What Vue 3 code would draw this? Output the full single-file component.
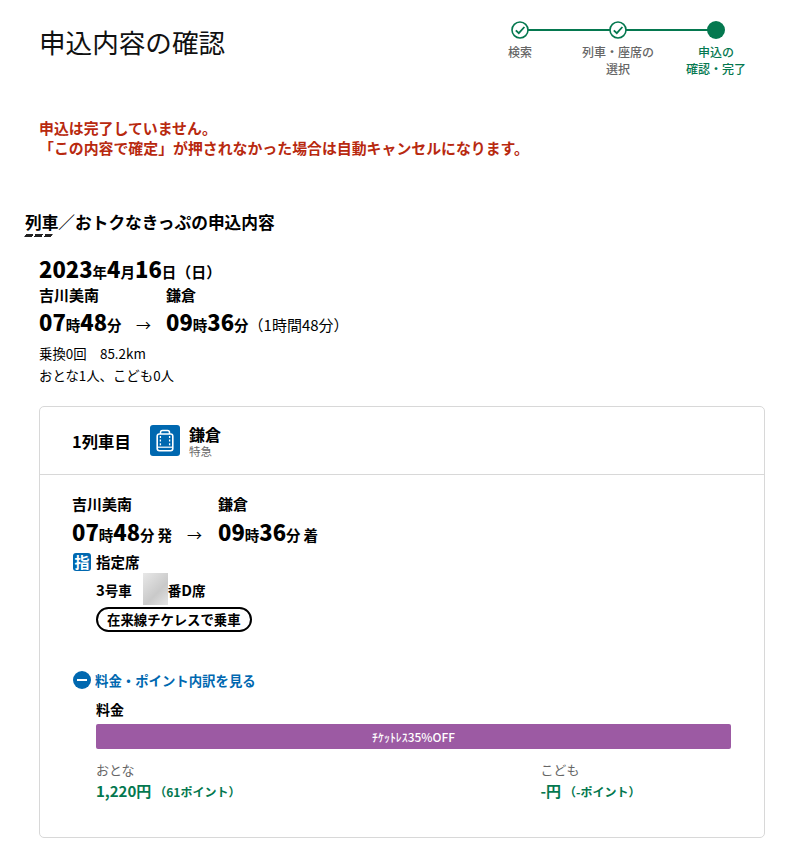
<script setup>
const steps = [
  { lines: ['検索'], done: true },
  { lines: ['列車・座席の', '選択'], done: true },
  { lines: ['申込の', '確認・完了'], done: false },
]
</script>

<template>
  <main class="page">
    <header class="top">
      <h1 class="title">申込内容の確認</h1>
      <ol class="stepper">
        <li v-for="(s, i) in steps" :key="i" class="step" :class="{ current: !s.done, last: i === 2 }">
          <span class="dot">
            <svg v-if="s.done" width="18" height="18" viewBox="0 0 18 18">
              <circle cx="9" cy="9" r="8" fill="#fff" stroke="#04784f" stroke-width="1.6" />
              <path d="M4.8 9.3l3 2.9L13.4 6" fill="none" stroke="#04784f" stroke-width="1.8" />
            </svg>
          </span>
          <span class="step-label"><span v-for="l in s.lines" :key="l" class="step-line">{{ l }}</span></span>
        </li>
      </ol>
    </header>

    <p class="warning">申込は完了していません。<br />「この内容で確定」が押されなかった場合は自動キャンセルになります。</p>

    <h2 class="section"><span class="section-text">列車／おトクなきっぷの申込内容</span></h2>

    <section class="summary">
      <div class="date"><b>2023</b>年<b>4</b>月<b>16</b>日<span class="dow">（日）</span></div>
      <div class="stations">
        <span class="st-from">吉川美南</span><span>鎌倉</span>
      </div>
      <div class="times">
        <span class="time-from"><b>07</b>時<b>48</b>分</span>
        <span class="arrow">→</span>
        <span><b>09</b>時<b>36</b>分</span>
        <span class="duration">（1時間48分）</span>
      </div>
      <p class="meta">乗換0回　85.2km</p>
      <p class="meta">おとな1人、こども0人</p>
    </section>

    <section class="card">
      <div class="card-head">
        <span class="train-no">1列車目</span>
        <span class="train-icon">
          <svg width="30" height="31" viewBox="0 0 30 31">
            <rect width="30" height="31" rx="3" fill="#0068b0" />
            <path d="M10.5 9V7.5Q10.5 5.5 12.5 5.5H17.5Q19.5 5.5 19.5 7.5V9" fill="none" stroke="#fff" stroke-width="1.5" />
            <rect x="7.2" y="9" width="15.6" height="16.8" rx="2.2" fill="none" stroke="#fff" stroke-width="1.6" />
            <path d="M7.5 22.2H22.5" stroke="#fff" stroke-width="1.2" />
            <path d="M10.4 11v10M19.6 11v10" stroke="#fff" stroke-width="1.3" stroke-dasharray="2 1.6" />
          </svg>
        </span>
        <span class="train-name"><strong>鎌倉</strong><small>特急</small></span>
      </div>
      <div class="card-body">
        <div class="stations detail">
          <span class="st-from-d">吉川美南</span><span>鎌倉</span>
        </div>
        <div class="times detail-times">
          <span class="time-from-d"><b>07</b>時<b>48</b>分<em>発</em></span>
          <span class="arrow-d">→</span>
          <span><b>09</b>時<b>36</b>分<em>着</em></span>
        </div>
        <div class="seat-type"><span class="seat-badge">指</span>指定席</div>
        <div class="seat-row">
          <span><i>3</i>号車</span><span class="blur"></span><span>番<i>D</i>席</span>
        </div>
        <span class="pill">在来線チケレスで乗車</span>

        <div class="toggle">
          <span class="minus"></span>
          料金・ポイント内訳を見る
        </div>
        <div class="fare">
          <h3 class="fare-title">料金</h3>
          <div class="fare-bar">ﾁｹｯﾄﾚｽ35%OFF</div>
          <div class="fare-cols">
            <div class="fare-col">
              <div class="fare-who">おとな</div>
              <div class="fare-price">1,220円<span>（61ポイント）</span></div>
            </div>
            <div class="fare-col">
              <div class="fare-who">こども</div>
              <div class="fare-price">-円<span>（-ポイント）</span></div>
            </div>
          </div>
        </div>
      </div>
    </section>
  </main>
</template>

<style>
html, body { margin: 0; background: #fff; }
</style>

<style scoped>
.page {
  width: 800px;
  height: 860px;
  overflow: hidden;
  box-sizing: border-box;
  font-family: "Noto Sans CJK JP", "Noto Sans", sans-serif;
  color: #000;
}
.top {
  display: flex;
  justify-content: space-between;
  padding: 22px 0 0 39px;
  height: 100px;
  box-sizing: border-box;
}
.title {
  margin: 0;
  font-size: 26.6px;
  font-weight: 400;
  line-height: 40px;
  color: #111;
}
.stepper {
  display: flex;
  list-style: none;
  margin: -1px 35px 0 0;
  padding: 0;
  width: 294px;
}
.step {
  position: relative;
  width: 98px;
  display: flex;
  flex-direction: column;
  align-items: center;
  font-size: 12px;
  font-weight: 500;
  color: #666;
}
.step::after {
  content: "";
  position: absolute;
  left: 49px;
  width: 98px;
  top: 8px;
  height: 2px;
  background: #04784f;
}
.step.last::after { display: none; }
.dot {
  position: relative;
  z-index: 1;
  width: 18px;
  height: 18px;
  border-radius: 50%;
  display: block;
}
.dot svg { display: block; }
.step.current .dot { background: #04784f; }
.step.current { color: #04784f; }
.step-label { margin-top: 5px; text-align: center; line-height: 16.5px; }
.step-line { display: block; }

.warning {
  margin: 18px 0 0 39px;
  font-size: 14.9px;
  font-weight: 700;
  line-height: 20px;
  color: #b8290f;
  height: 40px;
}
.section {
  margin: 51px 0 0 25px;
  font-size: 16.7px;
  line-height: 26px;
  font-weight: 700;
  height: 26px;
}
.section-text { position: relative; display: inline-block; }
.section-text::after {
  content: "";
  position: absolute;
  left: 0;
  top: 25px;
  width: 27px;
  height: 3px;
  transform: skewX(-30deg);
  background: repeating-linear-gradient(90deg, #222 0 7.5px, transparent 7.5px 9.75px);
}
.summary { margin: 18px 0 0 39px; }
.date {
  font-size: 14.5px;
  font-weight: 700;
  line-height: 30px;
  height: 30px;
}
.date b { font-size: 22px; }
.dow { font-size: 15px; }
.stations {
  display: flex;
  font-size: 15px;
  font-weight: 700;
  line-height: 20px;
  margin-top: 2px;
}
.st-from { width: 127px; }
.times {
  display: flex;
  align-items: baseline;
  font-size: 14.5px;
  font-weight: 700;
  line-height: 34px;
  margin-top: -1px;
}
.times b { font-size: 22px; }
.time-from { width: 97px; }
.arrow { width: 30px; font-weight: 400; font-size: 15px; }
.duration { font-weight: 400; font-size: 15px; }
.meta {
  margin: 0;
  font-size: 13.4px;
  line-height: 22px;
}
.card {
  margin: 20px 35px 0 39px;
  border: 1px solid #d8d8d8;
  border-radius: 5px;
  height: 432px;
  box-sizing: border-box;
}
.card-head {
  display: flex;
  align-items: center;
  height: 67px;
  padding-left: 32px;
  border-bottom: 1px solid #d8d8d8;
}
.train-no { font-size: 16.4px; font-weight: 700; width: 78px; }
.train-icon { width: 39px; height: 31px; }
.train-icon svg { display: block; }
.train-name { display: flex; flex-direction: column; }
.train-name strong { font-size: 16px; line-height: 18px; font-weight: 700; margin-bottom: 2px; }
.train-name small { font-size: 11.5px; line-height: 12px; color: #666; }
.card-body { padding: 19px 32px 0; }
.detail { margin-top: 0; }
.st-from-d { width: 146px; }
.detail-times { line-height: 34px; margin-top: 0; }
.time-from-d { width: 115px; }
.times em { font-style: normal; font-size: 14.5px; margin-left: 3px; }
.arrow-d { width: 31px; font-weight: 400; font-size: 15px; }
.seat-type {
  display: flex;
  align-items: center;
  font-size: 14.5px;
  font-weight: 700;
  line-height: 20px;
  margin-top: 0;
}
.seat-badge {
  width: 18px;
  height: 18px;
  margin-left: 1px;
  border-radius: 3px;
  background: #0068b0;
  color: #fff;
  font-size: 15px;
  line-height: 18px;
  text-align: center;
  margin-right: 5px;
}
.seat-row {
  display: flex;
  align-items: center;
  margin: 1px 0 0 24px;
  font-size: 13.5px;
  font-weight: 700;
  height: 32px;
}
.seat-row i { font-style: normal; font-size: 15px; }
.blur {
  width: 25px;
  height: 32px;
  margin: 0 0 0 11px;
  background: linear-gradient(135deg, #e8e8e8, #c9c9c9 60%, #e4e4e4);
}
.pill {
  display: inline-block;
  margin: 2px 0 0 24px;
  border: 2px solid #000;
  border-radius: 13px;
  font-size: 13.4px;
  font-weight: 700;
  line-height: 21px;
  padding: 0 9px;
}
.toggle {
  display: flex;
  align-items: center;
  margin-top: 38px;
  margin-left: 1px;
  font-size: 13.4px;
  font-weight: 700;
  line-height: 20px;
  color: #0068b0;
}
.minus {
  position: relative;
  width: 18px;
  height: 18px;
  border-radius: 50%;
  background: #0068b0;
  margin-right: 4px;
}
.minus::after {
  content: "";
  position: absolute;
  left: 4px;
  right: 4px;
  top: 8px;
  height: 2px;
  background: #fff;
}
.fare { margin: 9px 1px 0 24px; }
.fare-title { margin: 0; font-size: 14px; font-weight: 700; line-height: 20px; }
.fare-bar {
  margin-top: 5px;
  height: 25px;
  line-height: 25px;
  background: #9c5aa3;
  border-radius: 2px;
  color: #fff;
  text-align: center;
  font-size: 11.9px;
  font-weight: 500;
}
.fare-cols { display: flex; margin-top: 11px; }
.fare-col { flex: none; width: 444.5px; }
.fare-who { font-size: 13px; line-height: 20px; color: #666; }
.fare-price {
  font-size: 15px;
  font-weight: 700;
  line-height: 22px;
  color: #04784f;
}
.fare-price span { font-size: 12px; margin-left: 3px; }
</style>
